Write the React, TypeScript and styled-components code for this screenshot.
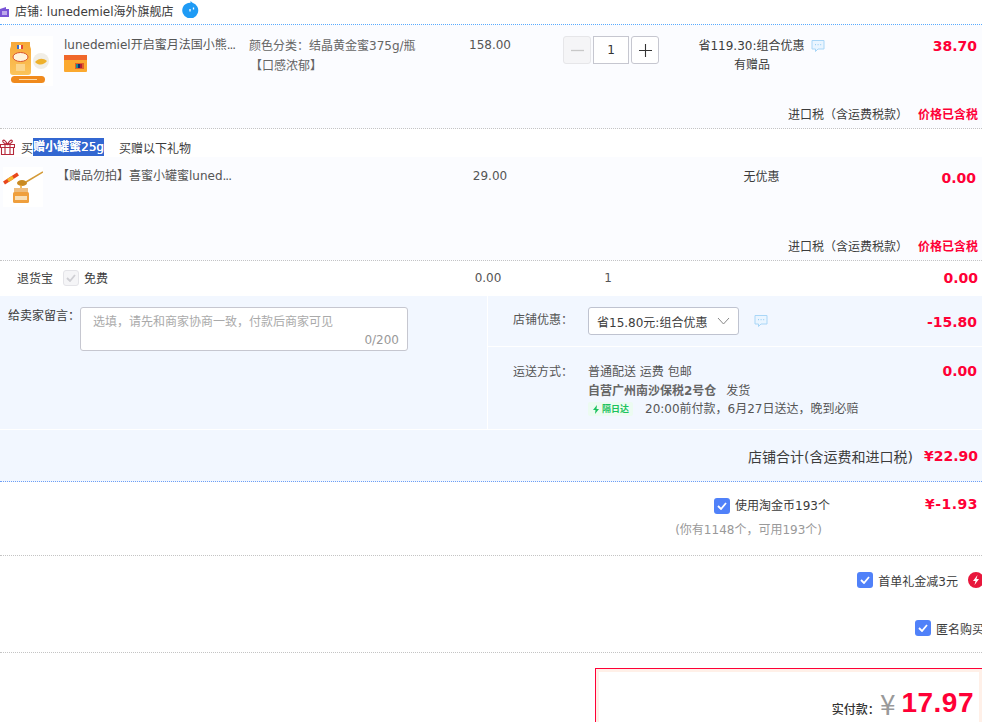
import React from 'react';
import styled, { createGlobalStyle } from 'styled-components';

const GlobalStyle = createGlobalStyle`
  html, body { margin: 0; padding: 0; background: #fff; }
  body {
    font-family: "DejaVu Sans", "Noto Sans CJK SC", sans-serif;
    font-size: 12px;
    color: #3c3c3c;
  }
`;

const Page = styled.div`
  width: 982px;
  height: 722px;
  overflow: hidden;
`;

const ShopHeader = styled.div`
  height: 24px;
  display: flex;
  align-items: center;
  border-bottom: 1px dotted #58aaff;
  color: #3c3c3c;
`;

const ShopName = styled.span`
  margin: 0 8px 3px 6px;
  white-space: pre;
`;

const ShopBadge = styled.svg`
  width: 9px;
  height: 11px;
  margin-bottom: 1px;
  flex: none;
`;

const ChatDrop = styled.svg`
  width: 17px;
  height: 17px;
  margin-bottom: 6px;
`;

const CartBlock = styled.div<{ $height: number }>`
  height: ${({ $height }) => $height}px;
  background: #fbfcff;
  box-sizing: border-box;
  display: flex;
  flex-direction: column;
  border-bottom: 1px dotted #c4c4c4;
`;

const CartRow = styled.div<{ $top: number }>`
  display: grid;
  grid-template-columns: 249px 200px 82px 149px 160px 1fr;
  padding-top: ${({ $top }) => $top}px;
  flex: 1;
  align-items: start;
`;

const ProductCell = styled.div<{ $imageLeft: number; $gap: number }>`
  display: flex;
  gap: ${({ $gap }) => $gap}px;
  padding-left: ${({ $imageLeft }) => $imageLeft}px;
`;

const ProductTitle = styled.div`
  color: #555;
  line-height: 18px;
  white-space: nowrap;
`;

const Dots = styled.span`
  letter-spacing: -1px;
`;

const ServiceIcon = styled.svg`
  display: block;
  width: 23px;
  height: 17px;
  margin-top: 1px;
`;

const SkuCell = styled.div`
  color: #666;
  line-height: 20px;
  white-space: nowrap;
`;

const SkuExtra = styled.div`
  padding-left: 1px;
`;

const PriceCell = styled.div`
  text-align: center;
  color: #555;
  line-height: 18px;
`;

const QtyCell = styled.div`
  display: flex;
  padding-left: 32px;
  gap: 2px;
`;

const QtyButton = styled.div<{ $disabled?: boolean }>`
  width: 28px;
  height: 28px;
  box-sizing: border-box;
  border: 1px solid ${({ $disabled }) => ($disabled ? '#e6e6e9' : '#c6c7d0')};
  border-radius: 3px;
  background: ${({ $disabled }) => ($disabled ? '#f5f5f7' : '#fff')};
  display: flex;
  align-items: center;
  justify-content: center;
`;

const QtyValue = styled.div`
  width: 36px;
  height: 28px;
  box-sizing: border-box;
  border: 1px solid #c6c7d0;
  background: #fff;
  line-height: 26px;
  text-align: center;
  color: #333;
`;

const PromoCell = styled.div`
  text-align: center;
  line-height: 19px;
  color: #3c3c3c;
  white-space: nowrap;
  padding: 1px 0 0 3px;
`;

const PromoNote = styled.div`
  padding-right: 19px;
`;

const Bubble = styled.svg<{ $left: number }>`
  width: 14px;
  height: 14px;
  margin-left: ${({ $left }) => $left}px;
  vertical-align: -3px;
`;

const Amount = styled.div<{ $right?: number; $top?: number }>`
  text-align: right;
  font-weight: 700;
  font-size: 14px;
  line-height: 18px;
  color: #ff0036;
  padding-right: ${({ $right }) => $right ?? 5}px;
  margin-top: ${({ $top }) => $top ?? 0}px;
  white-space: nowrap;
`;

const CoinsAmount = styled(Amount)`
  letter-spacing: 0.5px;
`;

const TaxLine = styled.div`
  display: flex;
  justify-content: flex-end;
  gap: 10px;
  padding: 0 4px 4px 0;
  line-height: 18px;
`;

const TaxPrice = styled.span`
  color: #ff0036;
  font-weight: 700;
`;

const GiftHeader = styled.div`
  height: 28px;
  box-sizing: border-box;
  padding-top: 8px;
  display: flex;
  align-items: center;
  white-space: nowrap;
  color: #3c3c3c;
`;

const GiftIcon = styled.svg`
  width: 15px;
  height: 16px;
  margin: 0 6px 0 0;
  flex: none;
`;

const SelectedText = styled.span`
  background: #3367d1;
  color: #fff;
  font-weight: 500;
  text-shadow: 0.3px 0 #fff;
  height: 18px;
  line-height: 18px;
  margin-right: 15px;
`;

const ReturnRow = styled.div`
  height: 35px;
  box-sizing: border-box;
  padding-bottom: 2px;
  display: grid;
  grid-template-columns: 450px 76px 150px 1fr;
  align-items: center;
  background: #fff;
`;

const ReturnLabel = styled.div`
  display: flex;
  align-items: center;
  padding-left: 17px;
`;

const MutedCheck = styled.span`
  width: 16px;
  height: 16px;
  box-sizing: border-box;
  margin: 0 5px 0 10px;
  border: 1px solid #e4e4e8;
  border-radius: 3px;
  background: #f5f5f7;
  display: flex;
  align-items: center;
  justify-content: center;
`;

const CenterText = styled.div`
  text-align: center;
  color: #555;
`;

const QtyText = styled(CenterText)`
  padding-left: 14px;
`;

const OrderPanel = styled.div`
  height: 134px;
  display: grid;
  grid-template-columns: 488px 1fr;
  background: #f2f7ff;
  border-bottom: 1px solid #fff;
  box-sizing: border-box;
`;

const MessageCell = styled.div`
  display: flex;
  padding: 11px 0 0 8px;
  border-right: 1px solid #fff;
`;

const MessageLabel = styled.div`
  line-height: 16px;
  margin-top: 1px;
  color: #3c3c3c;
`;

const MessageBox = styled.div`
  width: 328px;
  height: 44px;
  box-sizing: border-box;
  background: #fff;
  border: 1px solid #c6c7d0;
  border-radius: 3px;
  padding: 5px 8px 0 12px;
  color: #aaa;
  line-height: 18px;
`;

const Counter = styled.div`
  text-align: right;
  line-height: 18px;
  color: #999;
`;

const OptionsCell = styled.div`
  display: grid;
  grid-template-rows: 51px 1fr;
`;

const OptionRow = styled.div<{ $divided?: boolean; $top: number }>`
  display: grid;
  grid-template-columns: 75px 1fr auto;
  align-items: start;
  padding: ${({ $top }) => $top}px 0 0 25px;
  border-bottom: ${({ $divided }) => ($divided ? '1px solid #fff' : 'none')};
`;

const OptionLabel = styled.div<{ $top: number }>`
  color: #555;
  line-height: 18px;
  margin-top: ${({ $top }) => $top}px;
`;

const SelectBox = styled.div`
  width: 151px;
  height: 28px;
  box-sizing: border-box;
  background: #fff;
  border: 1px solid #bfc3d0;
  border-radius: 3px;
  display: flex;
  align-items: center;
  justify-content: space-between;
  padding: 0 8px;
  white-space: nowrap;
`;

const SelectLine = styled.div`
  display: flex;
  align-items: center;
`;

const ShipLine = styled.div`
  line-height: 18.5px;
  color: #555;
  white-space: nowrap;
  display: flex;
  align-items: center;
`;

const Warehouse = styled.b`
  color: #666;
  margin-right: 10px;
`;

const NextDay = styled.span`
  display: inline-flex;
  align-items: center;
  gap: 3px;
  height: 14px;
  padding: 0 4px 0 5px;
  margin-right: 12px;
  border-radius: 2px;
  background: #ecfbf1;
  color: #1cc25e;
  font-size: 9px;
  font-weight: 700;
`;

const StoreTotal = styled.div`
  height: 51px;
  display: flex;
  align-items: center;
  justify-content: flex-end;
  gap: 11px;
  background: #f2f7ff;
  border-bottom: 1px dotted #6e9ff5;
  padding-right: 4px;
  font-size: 14px;
  color: #3c3c3c;
`;

const CoinsBlock = styled.div`
  height: 74px;
  box-sizing: border-box;
  border-bottom: 1px dotted #c4c4c4;
  display: grid;
  grid-template-columns: 830px 1fr;
  grid-template-rows: 24px 1fr;
  align-items: start;
  padding-top: 15px;
`;

const CheckLine = styled.label`
  display: flex;
  align-items: center;
  justify-content: flex-end;
  gap: 5px;
  line-height: 18px;
  color: #3c3c3c;
  white-space: nowrap;
`;

const CoinsHint = styled.div`
  color: #999;
  padding-right: 8px;
  text-align: right;
  line-height: 18px;
`;

const ExtrasBlock = styled.div`
  height: 97px;
  box-sizing: border-box;
  border-bottom: 1px dotted #c4c4c4;
  padding-top: 16px;
  display: flex;
  flex-direction: column;
  gap: 32px;
`;

const ExtraLine = styled.div<{ $overflow: number }>`
  display: flex;
  justify-content: flex-end;
  margin-right: -${({ $overflow }) => $overflow}px;
  height: 16px;
  align-items: center;
  gap: 5px;
  white-space: nowrap;
`;

const CheckBox = styled.span`
  width: 16px;
  height: 16px;
  border-radius: 3px;
  background: #5081f9;
  display: flex;
  align-items: center;
  justify-content: center;
  flex: none;
`;

const RedBolt = styled.svg`
  width: 15px;
  height: 16px;
  margin: 0 0 0 5px;
  flex: none;
`;

const TotalWrap = styled.div`
  padding: 15px 0 0 595px;
`;

const TotalBox = styled.div`
  width: 388px;
  height: 80px;
  box-sizing: border-box;
  border: 1px solid #ff0036;
`;

const TotalInner = styled.div`
  height: 100%;
  box-sizing: border-box;
  border: 3px solid #fff0e8;
  display: flex;
  justify-content: flex-end;
  align-items: flex-start;
  padding: 16px 5px 0 0;
`;

const TotalLabel = styled.span`
  font-weight: 500;
  color: #333;
  margin-top: 12px;
`;

const Currency = styled.span`
  font-size: 28px;
  line-height: 30px;
  color: #999;
  margin-right: 6px;
  font-family: "Noto Sans CJK SC", sans-serif;
`;

const TotalPrice = styled.span`
  font-size: 28px;
  line-height: 30px;
  font-weight: 700;
  color: #ff0036;
  font-family: "Liberation Sans", sans-serif;
  letter-spacing: 0.5px;
`;

const Tick = ({ color = '#fff' }: { color?: string }) => (
  <svg width="10" height="8" viewBox="0 0 10 8">
    <path d="M1 4l3 3 5-6" fill="none" stroke={color} strokeWidth="1.8" />
  </svg>
);

const Chat = ({ left }: { left: number }) => (
  <Bubble $left={left} viewBox="0 0 14 14">
    <path d="M1 1.5h12v8.5H7l-2.5 2.5V10H1z" fill="#eaf5ff" stroke="#a9d6f7" strokeWidth="1" />
    <path d="M4 5.7h1M6.600 5.700h1M9.200 5.700h1" stroke="#8cc8f2" strokeWidth="1" />
  </Bubble>
);

const JarPicture = () => (
  <svg width="43" height="50" viewBox="0 0 43 50" style={{ display: 'block' }}>
    <defs>
      <linearGradient id="jarFill" x1="0" y1="0" x2="0" y2="1">
        <stop offset="0" stopColor="#f7a93a" />
        <stop offset="1" stopColor="#fbc45a" />
      </linearGradient>
    </defs>
    <rect width="43" height="50" fill="#fff" />
    <circle cx="31" cy="25" r="8" fill="#f1eee6" />
    <path d="M25 26c4-4 8-4 12-1-3 4-8 5-12 1z" fill="#eeb12c" />
    <path d="M1 6h19v4l1 3v23c0 2-1 3-3 3H3c-2 0-3-1-3-3V13l1-3z" fill="url(#jarFill)" />
    <rect x="7" y="9" width="2" height="4" fill="#3d6fc4" />
    <rect x="9" y="9" width="2" height="4" fill="#fff" />
    <rect x="11" y="9" width="2" height="4" fill="#e0483a" />
    <ellipse cx="10.500" cy="21" rx="7.500" ry="4.500" fill="#fff3dc" stroke="#d9552c" />
    <rect x="6" y="28" width="9" height="7" fill="#fbd58c" />
    <rect x="1" y="40" width="34" height="7" rx="3.500" fill="#f08a1d" />
    <path d="M9 43.500h18" stroke="#fbd9a8" strokeWidth="1" />
  </svg>
);

const HoneyPicture = () => (
  <svg width="40" height="40" viewBox="0 0 40 40" style={{ display: 'block' }}>
    <rect width="40" height="40" fill="#fff" />
    <path d="M1 16L15 7" stroke="#e8471c" strokeWidth="3.500" />
    <path d="M5 13.500l5-3.200" stroke="#f3b52d" strokeWidth="3.500" />
    <path d="M23 15L40 5" stroke="#d49a37" strokeWidth="1.500" />
    <ellipse cx="19" cy="16" rx="5" ry="3" fill="#c98a22" />
    <path d="M18 18v5" stroke="#efa52a" strokeWidth="1.500" />
    <rect x="11" y="21" width="14" height="4" fill="#eebd7f" />
    <rect x="10" y="25" width="16" height="11" rx="1.500" fill="#ef9f3d" />
    <rect x="12" y="29" width="12" height="4" fill="#f9dfb7" />
  </svg>
);

export default function App() {
  return (
    <Page>
      <GlobalStyle />
      <ShopHeader>
        <ShopBadge viewBox="0 0 9 11">
          <path d="M0 3l6-2v2h3v8H0z" fill="#7a55d6" />
          <path d="M2 6h5M2 8h5" stroke="#fff" strokeWidth="1" />
        </ShopBadge>
        <ShopName>店铺: lunedemiel海外旗舰店</ShopName>
        <ChatDrop viewBox="0 0 17 17">
          <path d="M8.500 0l2 1.700A8 8 0 1 1 1 6C2 3.500 5 1.700 8.500 1.700z" fill="#1f9bf5" />
          <path d="M8 8v2.500M11.500 6.500v2" stroke="#fff" strokeWidth="1.300" />
        </ChatDrop>
      </ShopHeader>

      <CartBlock $height={104}>
        <CartRow $top={11}>
          <ProductCell $imageLeft={10} $gap={11}>
            <JarPicture />
            <div>
              <ProductTitle>lunedemiel开启蜜月法国小熊<Dots>...</Dots></ProductTitle>
              <ServiceIcon viewBox="0 0 23 17">
                <rect width="23" height="17" rx="1" fill="#fba92f" />
                <rect width="23" height="5" fill="#f0672a" />
                <rect x="11" y="8" width="9" height="6" fill="#e25e2b" />
                <rect x="12" y="9" width="2" height="4" fill="#1a8f8a" />
                <rect x="14" y="9" width="2" height="4" fill="#1b2a70" />
                <rect x="16" y="9" width="2" height="4" fill="#b41f35" />
              </ServiceIcon>
            </div>
          </ProductCell>
          <SkuCell>
            颜色分类：结晶黄金蜜375g/瓶
            <SkuExtra>【口感浓郁】</SkuExtra>
          </SkuCell>
          <PriceCell>158.00</PriceCell>
          <QtyCell>
            <QtyButton $disabled>
              <svg width="13" height="13" viewBox="0 0 13 13">
                <path d="M0 6.500h13" stroke="#c8c8c8" strokeWidth="1.300" />
              </svg>
            </QtyButton>
            <QtyValue>1</QtyValue>
            <QtyButton>
              <svg width="13" height="13" viewBox="0 0 13 13">
                <path d="M0 6.500h13M6.500 0v13" stroke="#333" strokeWidth="1.100" />
              </svg>
            </QtyButton>
          </QtyCell>
          <PromoCell>
            省119.30:组合优惠
            <Chat left={6} />
            <PromoNote>有赠品</PromoNote>
          </PromoCell>
          <Amount $top={1}>38.70</Amount>
        </CartRow>
        <TaxLine>
          <span>进口税（含运费税款）</span>
          <TaxPrice>价格已含税</TaxPrice>
        </TaxLine>
      </CartBlock>

      <GiftHeader>
        <GiftIcon viewBox="0 0 15 16">
          <path d="M.5 5.500h14v3H.5zM1.500 8.500h12v7h-12zM5 5.500v10M10 5.500v10" fill="none" stroke="#b5283a" strokeWidth="1.100" />
          <path d="M7.500 5.500C6 2 4 .5 3 1.500s1 3.500 4.500 4zM7.500 5.500C9 2 11 .5 12 1.500s-1 3.500-4.500 4z" fill="none" stroke="#b5283a" strokeWidth="1.100" />
        </GiftIcon>
        买<SelectedText>赠小罐蜜25g</SelectedText>
        买赠以下礼物
      </GiftHeader>

      <CartBlock $height={104}>
        <CartRow $top={10}>
          <ProductCell $imageLeft={3} $gap={14}>
            <HoneyPicture />
            <ProductTitle>【赠品勿拍】喜蜜小罐蜜luned<Dots>...</Dots></ProductTitle>
          </ProductCell>
          <div />
          <PriceCell>29.00</PriceCell>
          <div />
          <PromoCell>无优惠</PromoCell>
          <Amount $right={6} $top={2}>0.00</Amount>
        </CartRow>
        <TaxLine>
          <span>进口税（含运费税款）</span>
          <TaxPrice>价格已含税</TaxPrice>
        </TaxLine>
      </CartBlock>

      <ReturnRow>
        <ReturnLabel>
          退货宝
          <MutedCheck><Tick color="#cfcfd4" /></MutedCheck>
          免费
        </ReturnLabel>
        <CenterText>0.00</CenterText>
        <QtyText>1</QtyText>
        <Amount $right={4}>0.00</Amount>
      </ReturnRow>

      <OrderPanel>
        <MessageCell>
          <MessageLabel>给卖家留言：</MessageLabel>
          <MessageBox>
            选填，请先和商家协商一致，付款后商家可见
            <Counter>0/200</Counter>
          </MessageBox>
        </MessageCell>
        <OptionsCell>
          <OptionRow $divided $top={11}>
            <OptionLabel $top={4}>店铺优惠：</OptionLabel>
            <SelectLine>
              <SelectBox>
                省15.80元:组合优惠
                <svg width="13" height="8" viewBox="0 0 13 8">
                  <path d="M1 1l5.500 6L12 1" fill="none" stroke="#888" strokeWidth="1" />
                </svg>
              </SelectBox>
              <Chat left={15} />
            </SelectLine>
            <Amount $right={5} $top={6}>-15.80</Amount>
          </OptionRow>
          <OptionRow $top={16}>
            <OptionLabel $top={0}>运送方式：</OptionLabel>
            <div>
              <ShipLine>普通配送 运费 包邮</ShipLine>
              <ShipLine><Warehouse>自营广州南沙保税2号仓</Warehouse>发货</ShipLine>
              <ShipLine>
                <NextDay>
                  <svg width="6" height="9" viewBox="0 0 6 9">
                    <path d="M4 0L0 5h2.500L2 9l4-5H3.500z" fill="#1cc25e" />
                  </svg>
                  隔日达
                </NextDay>
                20:00前付款，6月27日送达，晚到必赔
              </ShipLine>
            </div>
            <Amount $right={5} $top={-1}>0.00</Amount>
          </OptionRow>
        </OptionsCell>
      </OrderPanel>

      <StoreTotal>
        店铺合计(含运费和进口税)
        <Amount $right={0}>¥22.90</Amount>
      </StoreTotal>

      <CoinsBlock>
        <CheckLine>
          <CheckBox><Tick /></CheckBox>
          使用淘金币193个
        </CheckLine>
        <CoinsAmount $right={4} $top={-2}>¥-1.93</CoinsAmount>
        <CoinsHint>(你有1148个，可用193个)</CoinsHint>
      </CoinsBlock>

      <ExtrasBlock>
        <ExtraLine $overflow={1}>
          <CheckBox><Tick /></CheckBox>
          首单礼金减3元
          <RedBolt viewBox="0 0 15 16">
            <circle cx="8" cy="8" r="8" fill="#e8173c" />
            <path d="M9.500 3L5 9h2.500L6.500 13 11 7H8.500z" fill="#fff" />
          </RedBolt>
        </ExtraLine>
        <ExtraLine $overflow={2}>
          <CheckBox><Tick /></CheckBox>
          匿名购买
        </ExtraLine>
      </ExtrasBlock>

      <TotalWrap>
        <TotalBox>
          <TotalInner>
            <TotalLabel>实付款：</TotalLabel>
            <Currency>¥</Currency>
            <TotalPrice>17.97</TotalPrice>
          </TotalInner>
        </TotalBox>
      </TotalWrap>
    </Page>
  );
}
